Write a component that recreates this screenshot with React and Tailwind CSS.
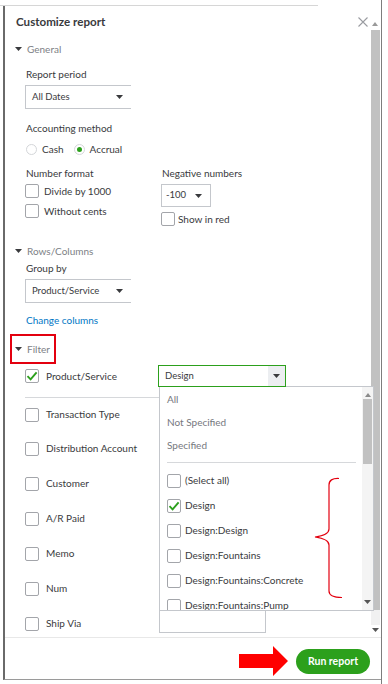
import React from 'react';

const Caret = ({ color = '#393a3d' }) => (
  <svg width="7" height="4" viewBox="0 0 7 4" className="shrink-0">
    <path d="M0 0h7L3.5 4z" fill={color} />
  </svg>
);

const Box = ({ checked }) => (
  <span className="w-[14px] h-[14px] shrink-0 border border-[#a3a5aa] rounded-[2px] bg-white flex items-center justify-center">
    {checked && (
      <svg width="12" height="10" viewBox="0 0 12 10">
        <path d="M1.5 5.2 L4.6 8.3 L10.6 1.4" fill="none" stroke="#2ca01c" strokeWidth="1.9" />
      </svg>
    )}
  </span>
);

const Section = ({ title }) => (
  <div className="h-[16px] flex items-center gap-[5px] pl-[10px]">
    <Caret />
    <span className="text-[10px] text-[#7d7f85]">{title}</span>
  </div>
);

const Label = ({ children, className = '' }) => (
  <div className={`h-[16px] flex items-center pl-[21px] text-[10px] text-[#393a3d] ${className}`}>{children}</div>
);

const Select = ({ value }) => (
  <div className="ml-[20px] w-[106px] h-[24px] border-l border-t border-b border-[#c4c7cc] flex items-center justify-between pl-[6px] pr-[8px]">
    <span className="text-[9.5px] text-[#393a3d]">{value}</span>
    <Caret />
  </div>
);

const filters = ['Transaction Type', 'Distribution Account', 'Customer', 'A/R Paid', 'Memo', 'Num', 'Ship Via'];
const options = [
  ['(Select all)', false],
  ['Design', true],
  ['Design:Design', false],
  ['Design:Fountains', false],
  ['Design:Fountains:Concrete', false],
  ['Design:Fountains:Pump', false],
];

export default function App() {
  return (
    <div className="w-[388px] h-[684px] bg-white flex overflow-hidden font-['Lato','Open_Sans',sans-serif]">
      <div className="w-[382px] h-full flex flex-col border-r border-[#7d7d7d]">
        <div className="h-[6px] w-[318px] border-b border-[#d6d6d6]" />

        <div className="ml-[3px] flex flex-col border-l-2 border-[#6a6a6a] border-b border-b-[#9a9a9a]">
          {/* scrolling body */}
          <div className="h-[631px] flex">
            <div className="flex-1 min-w-0 relative">
              <div className="h-[8px]" />
              <div className="h-[16px] flex items-center justify-between pl-[11px] pr-[1px]">
                <span className="text-[11.6px] font-bold text-[#393a3d]">Customize report</span>
                <svg width="10" height="10" viewBox="0 0 10 10">
                  <path d="M0.5 0.5L9.5 9.5M9.5 0.5L0.5 9.5" stroke="#9a9ca1" strokeWidth="1.1" />
                </svg>
              </div>

              <div className="mt-[11px]"><Section title="General" /></div>
              <Label className="mt-[9px]">Report period</Label>
              <div className="mt-[3px]"><Select value="All Dates" /></div>

              <Label className="mt-[11px]">Accounting method</Label>
              <div className="mt-[5px] h-[16px] flex items-center pl-[21px] text-[10px] text-[#393a3d]">
                <span className="w-[11px] h-[11px] rounded-full border border-[#d4d6d9]" />
                <span className="ml-[5px]">Cash</span>
                <span className="ml-[10px] w-[11px] h-[11px] rounded-full border border-[#d4d6d9] flex items-center justify-center">
                  <span className="w-[5px] h-[5px] rounded-full bg-[#2ca01c]" />
                </span>
                <span className="ml-[5px]">Accrual</span>
              </div>

              <div className="mt-[8px] h-[16px] flex items-center pl-[21px] text-[10px] text-[#393a3d]">
                <span className="w-[136px]">Number format</span>
                <span>Negative numbers</span>
              </div>
              <div className="mt-[3px] flex pl-[20px] text-[10px] text-[#393a3d]">
                <div className="w-[136px] flex flex-col gap-[6px]">
                  <div className="h-[14px] flex items-center gap-[5px]"><Box />Divide by 1000</div>
                  <div className="h-[14px] flex items-center gap-[5px]"><Box />Without cents</div>
                </div>
                <div className="flex flex-col gap-[5px]">
                  <div className="w-[50px] h-[23px] border border-[#c4c7cc] flex items-center justify-between pl-[4px] pr-[8px]">
                    <span className="text-[9.5px]">-100</span>
                    <Caret />
                  </div>
                  <div className="h-[14px] flex items-center gap-[3px]"><Box />Show in red</div>
                </div>
              </div>

              <div className="mt-[17px]"><Section title="Rows/Columns" /></div>
              <Label className="mt-[1px]">Group by</Label>
              <div className="mt-[3px]"><Select value="Product/Service" /></div>
              <Label className="mt-[9px]"><span className="text-[#0077c5]">Change columns</span></Label>

              <div className="mt-[6px] ml-[5px] w-[46px] h-[30px] border-2 border-[#e3000f] flex items-center gap-[5px] pl-[3px]">
                <Caret />
                <span className="text-[10px] text-[#7d7f85]">Filter</span>
              </div>

              {/* filter row */}
              <div className="mt-[1px] h-[22px] flex items-center">
                <div className="w-[153px] flex items-center gap-[7px] pl-[20px] text-[10px] text-[#393a3d]">
                  <Box checked />Product/Service
                </div>
                <div className="relative z-10">
                  {/* open dropdown */}
                  <div className="absolute top-[21px] left-[1px] flex flex-col">
                    <div className="relative w-[215px] h-[225px] bg-white border border-[#c4c7cc] flex overflow-hidden">
                      <div className="flex-1 flex flex-col pt-[1px] text-[10px]">
                        {['All', 'Not Specified', 'Specified'].map((t) => (
                          <div key={t} className="h-[23px] shrink-0 flex items-center pl-[7px] text-[#76787e]">{t}</div>
                        ))}
                        <div className="mt-[5px] ml-[7px] w-[189px] h-px bg-[#d6d8db] shrink-0" />
                        <div className="mt-[5px] shrink-0">
                          {options.map(([t, c]) => (
                            <div key={t} className="h-[25px] flex items-center gap-[4px] pl-[7px] text-[#393a3d]">
                              <Box checked={c} />{t}
                            </div>
                          ))}
                        </div>
                      </div>
                      <div className="w-[11px] bg-[#f4f4f4] flex flex-col items-center">
                        <div className="h-[12px] shrink-0 flex items-end pb-[2px]">
                          <svg width="6" height="4" viewBox="0 0 6 4"><path d="M0 4h6L3 0z" fill="#8a8a8a" /></svg>
                        </div>
                        <div className="w-[9px] h-[65px] shrink-0 bg-[#c1c1c1]" />
                        <div className="flex-1" />
                        <div className="h-[12px] shrink-0 flex items-start pt-[2px]">
                          <Caret color="#555" />
                        </div>
                      </div>
                      {/* annotation brace */}
                      <svg className="absolute left-[152px] top-[90px]" width="30" height="122" viewBox="0 0 30 122">
                        <path d="M27 1.5 Q17 1 17 8 L17 52 Q17 58 3 60 Q17 62 17 68 L17 114 Q17 120.5 30 120.5" fill="none" stroke="#e3000f" strokeWidth="1.2" />
                      </svg>
                    </div>
                    <div className="w-[107px] h-[22px] border border-t-0 border-[#c4c7cc] bg-white" />
                  </div>

                  <div className="relative w-[128px] h-[22px] border border-[#2ca01c] flex items-center bg-white">
                    <span className="flex-1 pl-[6px] text-[9.5px] text-[#393a3d]">Design</span>
                    <span className="w-[17px] h-full bg-[#eceef1] flex items-center justify-center"><Caret /></span>
                  </div>
                </div>
              </div>

              <div className="mt-[10px] ml-[20px] w-[330px] h-px bg-[#d6d8db]" />

              {filters.map((f, i) => (
                <div key={f} className={`${i === 0 ? 'h-[33px]' : 'h-[35px]'} flex items-center gap-[7px] pl-[20px] text-[10px] text-[#393a3d]`}>
                  <Box />{f}
                </div>
              ))}
            </div>

            {/* main scrollbar */}
            <div className="w-[12px] flex flex-col items-center">
              <div className="mt-[14px] h-[8px] flex items-center">
                <svg width="6" height="4" viewBox="0 0 6 4"><path d="M0 4h6L3 0z" fill="#9a9a9a" /></svg>
              </div>
              <div className="mt-[2px] w-[9px] h-[580px] bg-[#c1c1c1]" />
              <div className="flex-1 w-[9px] bg-[#f1f1f1]" />
              <div className="h-[10px] flex items-center mb-[2px]"><Caret color="#555" /></div>
            </div>
          </div>

          {/* footer */}
          <div className="h-[42px] border-t border-[#e8e8e8] flex items-start justify-end pt-[8px] pr-[11px] gap-[8px]">
            <svg width="49" height="30" viewBox="0 0 49 30">
              <path d="M0 8h34V0l15 15-15 15V22H0z" fill="#ff0000" />
            </svg>
            <button className="mt-[3px] w-[74px] h-[25px] rounded-full bg-[#2ca01c] text-white text-[10.5px] font-bold">
              Run report
            </button>
          </div>
        </div>
      </div>
    </div>
  );
}
